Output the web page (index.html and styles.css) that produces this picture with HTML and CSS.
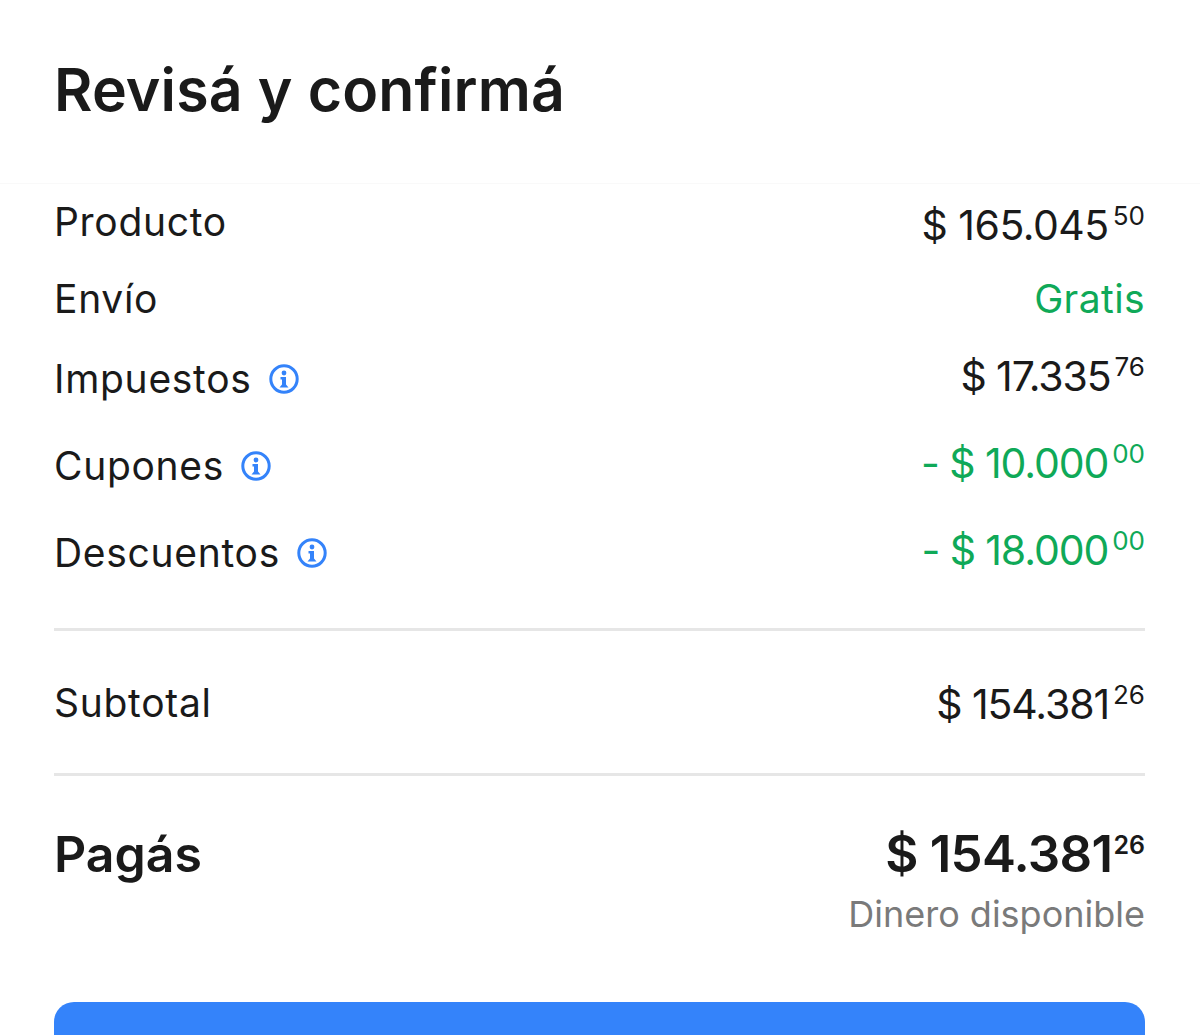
FILE: index.html
```html
<!DOCTYPE html>
<html lang="es">
<head>
<meta charset="utf-8">
<title>Revisá y confirmá</title>
<link rel="stylesheet" href="styles.css">
</head>
<body>
<header class="head"><h1>Revisá y confirmá</h1></header>
<main class="content">
  <section class="rows">
    <div class="row r1"><span>Producto</span><span class="price">$ 165.045<sup>50</sup></span></div>
    <div class="row r2"><span>Envío</span><span class="green gratis">Gratis</span></div>
    <div class="row r3"><span class="lab">Impuestos<svg class="info" viewBox="0 0 30 30"><circle cx="15" cy="15" r="13.2"/><circle class="d" cx="15" cy="9" r="2.400"/><path class="d" d="M11.500 13h5.500v7.500l2.500 3h-9l2.500-3v-5h-1.500z"/></svg></span><span class="price tight up">$ 17.335<sup>76</sup></span></div>
    <div class="row r4"><span class="lab">Cupones<svg class="info" viewBox="0 0 30 30"><circle cx="15" cy="15" r="13.2"/><circle class="d" cx="15" cy="9" r="2.400"/><path class="d" d="M11.500 13h5.500v7.500l2.500 3h-9l2.500-3v-5h-1.500z"/></svg></span><span class="price tight up green">- $ 10.000<sup>00</sup></span></div>
    <div class="row r5"><span class="lab">Descuentos<svg class="info" viewBox="0 0 30 30"><circle cx="15" cy="15" r="13.2"/><circle class="d" cx="15" cy="9" r="2.400"/><path class="d" d="M11.500 13h5.500v7.500l2.500 3h-9l2.500-3v-5h-1.500z"/></svg></span><span class="price tight up green">- $ 18.000<sup>00</sup></span></div>
  </section>
  <hr class="rule rule1">
  <div class="row sub"><span>Subtotal</span><span class="price tight">$ 154.381<sup>26</sup></span></div>
  <hr class="rule rule2">
  <div class="row total"><span>Pagás</span><span class="price">$ 154.381<sup>26</sup></span></div>
  <div class="note">Dinero disponible</div>
  <div class="btn"></div>
</main>
</body>
</html>
```
FILE: styles.css
```css
* { box-sizing: border-box; }
html, body { margin: 0; height: 1035px; overflow: hidden; background: #fff; }
body { font-family: "Inter", "Noto Sans", sans-serif; color: #1a1a1a; }
.head { height: 184px; padding: 54px 54px 0; border-bottom: 1px solid #f9f9f9; }
h1 { margin: 0; font-size: 59px; line-height: 72px; font-weight: 600; letter-spacing: 0.15px; }
.content { padding: 0 55px 0 54px; }
.row { display: flex; justify-content: space-between; align-items: center; font-size: 39px; line-height: 48px; letter-spacing: 0.7px; }
.r1 { margin-top: 14px; }
.r2 { margin-top: 29px; }
.r3 { margin-top: 32px; }
.r4 { margin-top: 39px; }
.r5 { margin-top: 39px; }
.lab { display: flex; align-items: center; gap: 17px; }
.info { width: 30px; height: 30px; }
.info circle { fill: none; stroke: #3483fa; stroke-width: 3; }
.info .d { fill: #3483fa; stroke: none; }
.price { font-size: 41px; letter-spacing: -0.5px; margin: 3px 0 -3px; }
.tight { letter-spacing: -1.1px; margin: 1px 0 -1px; }
.up { margin: -3px 0 3px; }
sup { font-size: 26px; font-weight: 400; line-height: 0; vertical-align: 15px; margin-left: 4px; letter-spacing: 0; }
.green { color: #0fa958; }
.gratis { letter-spacing: 0.4px; }
.rule { margin: 0; border: 0; height: 3px; background: #e6e6e6; }
.rule1 { margin-top: 51px; }
.rule2 { margin-top: 46px; }
.sub { margin-top: 48px; }
.total { margin-top: 48px; font-size: 50px; line-height: 60px; font-weight: 600; letter-spacing: 0; }
.total .price { font-size: 51px; letter-spacing: -0.7px; margin: 0; }
.total sup { font-size: 25px; font-weight: 600; vertical-align: 18px; margin-left: 1px; letter-spacing: 0; }
.note { margin-top: 8px; text-align: right; font-size: 36px; line-height: 44px; color: #7a7a7a; }
.btn { margin-top: 66px; height: 37px; background: #3483fa; border-radius: 20px 20px 0 0; }
```
